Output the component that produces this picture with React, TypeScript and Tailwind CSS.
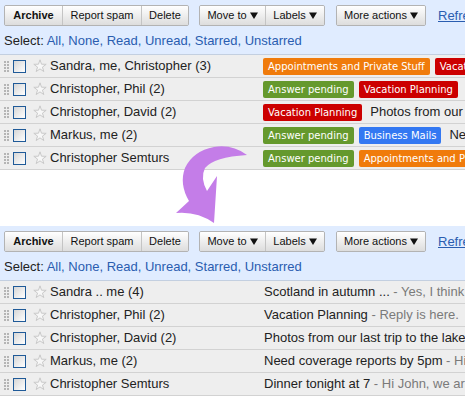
import React from "react";

const chipColors: Record<string, string> = {
  orange: "bg-[#f07b0b]",
  red: "bg-[#cc0000]",
  green: "bg-[#65992d]",
  blue: "bg-[#3378f2]",
};

type Chip = [string, string];
type Row = { sender: string; chips: Chip[]; subject: string; snippet: string };

const topRows: Row[] = [
  { sender: "Sandra, me, Christopher (3)", chips: [["Appointments and Private Stuff", "orange"], ["Vacation Planning", "red"]], subject: "Scotland in autumn ...", snippet: " - Yes, I think" },
  { sender: "Christopher, Phil (2)", chips: [["Answer pending", "green"], ["Vacation Planning", "red"]], subject: "Vacation Planning", snippet: " - Reply is here." },
  { sender: "Christopher, David (2)", chips: [["Vacation Planning", "red"]], subject: "Photos from our last trip to the lake", snippet: " - Hi" },
  { sender: "Markus, me (2)", chips: [["Answer pending", "green"], ["Business Mails", "blue"]], subject: "Need coverage reports by 5pm", snippet: " - Hi" },
  { sender: "Christopher Semturs", chips: [["Answer pending", "green"], ["Appointments and Private Stuff", "orange"]], subject: "Dinner tonight at 7", snippet: " - Hi John, we are" },
];

const bottomRows: Row[] = [
  { sender: "Sandra .. me (4)", chips: [], subject: "Scotland in autumn ...", snippet: " - Yes, I think that would be great" },
  { sender: "Christopher, Phil (2)", chips: [], subject: "Vacation Planning", snippet: " - Reply is here." },
  { sender: "Christopher, David (2)", chips: [], subject: "Photos from our last trip to the lake", snippet: " - Hi all" },
  { sender: "Markus, me (2)", chips: [], subject: "Need coverage reports by 5pm", snippet: " - Hi John" },
  { sender: "Christopher Semturs", chips: [], subject: "Dinner tonight at 7", snippet: " - Hi John, we are going" },
];

function Tri() {
  return (
    <svg width="8" height="7" viewBox="0 0 8 7" className="ml-[3px] inline-block">
      <polygon points="0,0.5 8,0.5 4,7" fill="#111" />
    </svg>
  );
}

function Btn({ children, w, bold, first }: { children: React.ReactNode; w: string; bold?: boolean; first?: boolean }) {
  return (
    <div
      className={`${w} shrink-0 h-[19px] flex items-center justify-center bg-gradient-to-b from-white to-[#dddddd] text-[11px] text-[#111] ${bold ? "font-bold" : ""} ${first ? "" : "border-l border-[#c4c4c4]"}`}
    >
      {children}
    </div>
  );
}

function Group({ children }: { children: React.ReactNode }) {
  return <div className="flex shrink-0 border border-[#b3b3b3] rounded-[2px] overflow-hidden">{children}</div>;
}

function Panel() {
  const links = ["All", "None", "Read", "Unread", "Starred", "Unstarred"];
  return (
    <div className="bg-[#e0ecff] border-b border-[#c3cfe0] pt-[5px] pb-[5px] pl-[4px]">
      <div className="flex items-center h-[21px]">
        <Group>
          <Btn w="w-[57px]" bold first>Archive</Btn>
          <Btn w="w-[79px]">Report spam</Btn>
          <Btn w="w-[47px]">Delete</Btn>
        </Group>
        <div className="w-[10px] shrink-0" />
        <Group>
          <Btn w="w-[65px]" first>Move to<Tri /></Btn>
          <Btn w="w-[59px]">Labels<Tri /></Btn>
        </Group>
        <div className="w-[11px] shrink-0" />
        <Group>
          <Btn w="w-[88px]" first>More actions<Tri /></Btn>
        </Group>
        <span className="ml-[12px] shrink-0 text-[13px] text-[#2a5db0] underline whitespace-nowrap">Refresh</span>
      </div>
      <div className="mt-[7px] h-[16px] leading-[16px] text-[13px] text-[#222] whitespace-nowrap">
        Select:{" "}
        {links.map((l, i) => (
          <span key={l}>
            <span className="text-[#2a5db0]">{l}</span>
            {i < links.length - 1 ? <span className="text-[#2a5db0]">, </span> : null}
          </span>
        ))}
      </div>
    </div>
  );
}

function Handle() {
  return (
    <div className="grid grid-cols-2 gap-[1px] w-[5px] shrink-0">
      {Array.from({ length: 8 }).map((_, i) => (
        <div key={i} className="w-[2px] h-[2px] bg-[#b5b5b5]" />
      ))}
    </div>
  );
}

function Star() {
  return (
    <svg width="14" height="14" viewBox="0 0 14 14" className="shrink-0">
      <polygon
        points="7,0.8 8.53,5.2 13.18,5.29 9.47,8.1 10.82,12.56 7,9.9 3.18,12.56 4.53,8.1 0.82,5.29 5.47,5.2"
        fill="#f7f7f7"
        stroke="#c9c9c9"
        strokeWidth="1"
        strokeLinejoin="round"
      />
    </svg>
  );
}

function MailRow({ r }: { r: Row }) {
  return (
    <div className="flex items-center h-[23px] bg-[#eeeeee] border-b border-[#d2d2d2] whitespace-nowrap overflow-hidden text-[13px] text-[#222]">
      <div className="ml-[4px] shrink-0">
        <Handle />
      </div>
      <div className="ml-[4px] w-[13px] h-[13px] shrink-0 border border-[#1f5a98] bg-gradient-to-br from-[#d6d6d6] to-white" />
      <div className="ml-[7px] shrink-0">
        <Star />
      </div>
      <div className="ml-[3px] w-[213px] shrink-0 overflow-hidden">{r.sender}</div>
      <div className="flex items-center shrink-0">
        {r.chips.map(([t, c], i) => (
          <span
            key={i}
            className={`${chipColors[c]} mr-[5px] h-[17px] leading-[17px] px-[5px] rounded-[2px] text-white text-[10px] shrink-0`}
            style={{ fontFamily: "'DejaVu Sans', Verdana, sans-serif" }}
          >
            {t}
          </span>
        ))}
        <span className={r.chips.length ? "ml-[3px]" : "ml-[1px]"}>
          {r.subject}
          <span className="text-[#7a7a7a]">{r.snippet}</span>
        </span>
      </div>
    </div>
  );
}

export default function App() {
  return (
    <div
      className="relative w-[465px] h-[398px] overflow-hidden bg-white"
      style={{ fontFamily: "'Liberation Sans', Arial, sans-serif" }}
    >
      <Panel />
      {topRows.map((r, i) => (
        <MailRow key={i} r={r} />
      ))}
      <div className="h-[56px]" />
      <Panel />
      {bottomRows.map((r, i) => (
        <MailRow key={i} r={r} />
      ))}
      <svg
        className="absolute left-[170px] top-[140px]"
        width="90"
        height="90"
        viewBox="170 140 90 90"
      >
        <path
          d="M 247 155 Q 232 144 214 147 Q 193 151 185 168 Q 179 184 189 201 L 176 213 Q 197 211 214 223 L 217 176 L 207 191 Q 200 178 205 168 Q 214 157 247 155 Z"
          fill="#c47de8"
        />
      </svg>
    </div>
  );
}
